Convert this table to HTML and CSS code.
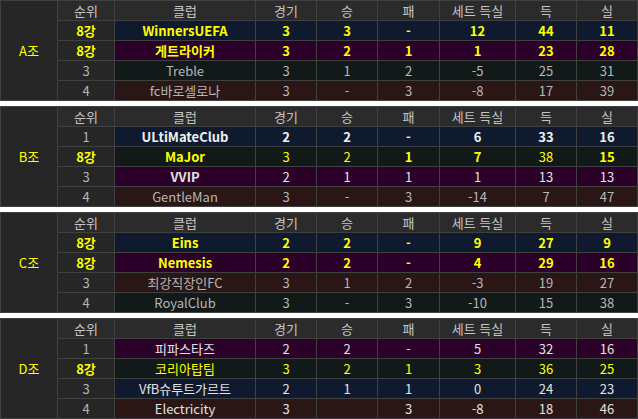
FILE: index.html
```html
<!DOCTYPE html>
<html lang="ko">
<head>
    <meta charset="UTF-8">
    <title>조별 순위</title>
    <link rel="stylesheet" href="styles.css">
</head>
<body>
    <table class="group">
        <colgroup>
            <col class="c-label"><col class="c-rank"><col class="c-club"><col class="c-num"><col class="c-num">
            <col class="c-num2"><col class="c-set"><col class="c-num"><col class="c-num">
        </colgroup>
        <tr class="head">
            <td class="label" rowspan="5">A조</td>
            <th>순위</th><th>클럽</th><th>경기</th><th>승</th><th>패</th><th>세트 득실</th><th>득</th><th>실</th>
        </tr>
        <tr class="navy y">
            <td class="rank y">8강</td><td>WinnersUEFA</td><td>3</td><td>3</td><td>-</td><td>12</td><td>44</td><td>11</td>
        </tr>
        <tr class="purple y">
            <td class="rank y">8강</td><td>게트라이커</td><td>3</td><td>2</td><td>1</td><td>1</td><td>23</td><td>28</td>
        </tr>
        <tr class="green g">
            <td class="rank">3</td><td>Treble</td><td>3</td><td>1</td><td>2</td><td>-5</td><td>25</td><td>31</td>
        </tr>
        <tr class="brown g">
            <td class="rank">4</td><td>fc바로셀로나</td><td>3</td><td>-</td><td>3</td><td>-8</td><td>17</td><td>39</td>
        </tr>
    </table>

    <table class="group">
        <colgroup>
            <col class="c-label"><col class="c-rank"><col class="c-club"><col class="c-num"><col class="c-num">
            <col class="c-num2"><col class="c-set"><col class="c-num"><col class="c-num">
        </colgroup>
        <tr class="head">
            <td class="label" rowspan="5">B조</td>
            <th>순위</th><th>클럽</th><th>경기</th><th>승</th><th>패</th><th>세트 득실</th><th>득</th><th>실</th>
        </tr>
        <tr class="navy w">
            <td class="rank">1</td><td>ULtiMateClub</td><td>2</td><td>2</td><td>-</td><td>6</td><td>33</td><td>16</td>
        </tr>
        <tr class="green yn">
            <td class="rank y">8강</td><td class="b">MaJor</td><td>3</td><td>2</td><td class="b">1</td><td class="b">7</td><td>38</td><td class="b">15</td>
        </tr>
        <tr class="purple wn">
            <td class="rank">3</td><td class="b">VVIP</td><td>2</td><td>1</td><td>1</td><td>1</td><td>13</td><td>13</td>
        </tr>
        <tr class="brown g">
            <td class="rank">4</td><td>GentleMan</td><td>3</td><td>-</td><td>3</td><td>-14</td><td>7</td><td>47</td>
        </tr>
    </table>

    <table class="group">
        <colgroup>
            <col class="c-label"><col class="c-rank"><col class="c-club"><col class="c-num"><col class="c-num">
            <col class="c-num2"><col class="c-set"><col class="c-num"><col class="c-num">
        </colgroup>
        <tr class="head">
            <td class="label" rowspan="5">C조</td>
            <th>순위</th><th>클럽</th><th>경기</th><th>승</th><th>패</th><th>세트 득실</th><th>득</th><th>실</th>
        </tr>
        <tr class="navy y">
            <td class="rank y">8강</td><td>Eins</td><td>2</td><td>2</td><td>-</td><td>9</td><td>27</td><td>9</td>
        </tr>
        <tr class="purple y">
            <td class="rank y">8강</td><td>Nemesis</td><td>2</td><td>2</td><td>-</td><td>4</td><td>29</td><td>16</td>
        </tr>
        <tr class="brown g">
            <td class="rank">3</td><td>최강직장인FC</td><td>3</td><td>1</td><td>2</td><td>-3</td><td>19</td><td>27</td>
        </tr>
        <tr class="green g">
            <td class="rank">4</td><td>RoyalClub</td><td>3</td><td>-</td><td>3</td><td>-10</td><td>15</td><td>38</td>
        </tr>
    </table>

    <table class="group">
        <colgroup>
            <col class="c-label"><col class="c-rank"><col class="c-club"><col class="c-num"><col class="c-num">
            <col class="c-num2"><col class="c-set"><col class="c-num"><col class="c-num">
        </colgroup>
        <tr class="head">
            <td class="label" rowspan="5">D조</td>
            <th>순위</th><th>클럽</th><th>경기</th><th>승</th><th>패</th><th>세트 득실</th><th>득</th><th>실</th>
        </tr>
        <tr class="purple wn">
            <td class="rank">1</td><td>피파스타즈</td><td>2</td><td>2</td><td>-</td><td>5</td><td>32</td><td>16</td>
        </tr>
        <tr class="green yn">
            <td class="rank y">8강</td><td>코리아탑팀</td><td>3</td><td>2</td><td>1</td><td>3</td><td>36</td><td>25</td>
        </tr>
        <tr class="navy wn">
            <td class="rank">3</td><td>VfB슈투트가르트</td><td>2</td><td>1</td><td>1</td><td>0</td><td>24</td><td>23</td>
        </tr>
        <tr class="brown wn">
            <td class="rank">4</td><td>Electricity</td><td>3</td><td></td><td>3</td><td>-8</td><td>18</td><td>46</td>
        </tr>
    </table>
</body>
</html>
```

FILE: styles.css
```css
:root {
    --line: #404040;
    --side: #262626;
    --head: #2b2b2b;
    --navy: #101a2f;
    --purple: #2b0029;
    --green: #111a18;
    --brown: #2a1715;
    --yellow: #ffff00;
    --light: #e2e2e2;
    --gray: #b6b6b6;
}

body {
    margin: 0;
    background: white;
    font-family: "Noto Sans CJK KR", "DejaVu Sans", sans-serif;
    font-size: 13px;
}

.group {
    width: 638px;
    border-collapse: collapse;
    table-layout: fixed;
    margin-bottom: 5px;
}

.group:last-child {
    margin-bottom: 0;
}

.c-label,
.c-rank {
    width: 57px;
}

.c-club {
    width: 141px;
}

.c-num {
    width: 61px;
}

.c-num2 {
    width: 62px;
}

.c-set {
    width: 76px;
}

.group td,
.group th {
    border: 1px solid var(--line);
    height: 19px;
    padding: 0;
    text-align: center;
    line-height: 18px;
    font-weight: normal;
    white-space: nowrap;
    overflow: hidden;
}

.head th {
    background: var(--head);
    color: #c4c4c4;
}

.label {
    background: var(--side);
    color: var(--yellow);
}

.navy td { background: var(--navy); }
.purple td { background: var(--purple); }
.green td { background: var(--green); }
.brown td { background: var(--brown); }

.group .rank {
    background: var(--side);
}

.y td {
    color: var(--yellow);
    font-weight: bold;
}

.yn td {
    color: var(--yellow);
}

.w td {
    color: #f0f0f0;
    font-weight: bold;
}

.wn td {
    color: var(--light);
}

.g td {
    color: var(--gray);
}

.group td.rank {
    color: var(--gray);
    font-weight: normal;
}

.group td.rank.y {
    color: var(--yellow);
    font-weight: bold;
}

.group td.b {
    font-weight: bold;
}
```
